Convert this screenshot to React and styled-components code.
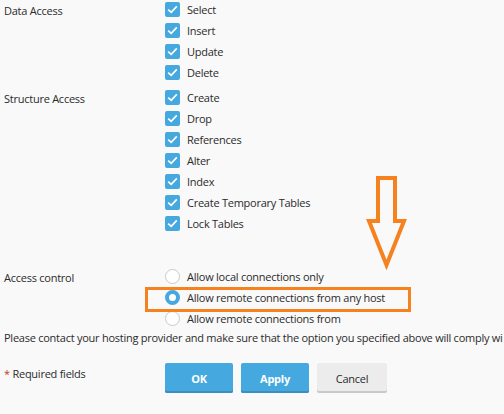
import React from "react";
import styled, { createGlobalStyle } from "styled-components";

const GlobalStyle = createGlobalStyle`
  html, body { margin: 0; padding: 0; }
  body {
    background: #f9f9f9;
    font-family: "Open Sans", "Noto Sans", sans-serif;
    font-size: 11px;
    letter-spacing: -0.25px;
    color: #2b2b2b;
    overflow: hidden;
  }
`;

const Page = styled.div`
  position: relative;
  width: 504px;
  height: 414px;
  padding: 2px 0 0 4px;
  box-sizing: border-box;
  white-space: nowrap;
  overflow: hidden;
`;

const Section = styled.div`
  display: grid;
  grid-template-columns: 161px 1fr;
  margin-top: ${(p) => p.$gap || 0}px;
`;

const Label = styled.div`
  line-height: 15px;
  padding-top: 1px;
`;

const Options = styled.div`
  display: flex;
  flex-direction: column;
`;

const Row = styled.div`
  display: flex;
  align-items: center;
  gap: 7px;
  height: 15px;
  margin-bottom: 6px;
  line-height: 15px;
`;

const Check = styled.span`
  width: 15px;
  height: 15px;
  border-radius: 2px;
  background: #45a9e0;
  display: inline-flex;
  align-items: center;
  justify-content: center;
  flex: none;
`;

const Radio = styled.span`
  width: 15px;
  height: 15px;
  border-radius: 50%;
  box-sizing: border-box;
  border: ${(p) => (p.$on ? "4px solid #45a9e0" : "1px solid #c9c9c9")};
  background: #fff;
  flex: none;
`;

const Note = styled.p`
  margin: 0;
  margin-top: -2px;
  line-height: 15px;
  width: 500px;
  overflow: hidden;
`;

const Footer = styled.div`
  display: grid;
  grid-template-columns: 161px 1fr;
  margin-top: 18px;
`;

const Required = styled.div`
  padding-top: 3px;
  line-height: 15px;
  & span { color: #c0392b; }
`;

const Buttons = styled.div`
  display: flex;
  gap: 8px;
`;

const Button = styled.button`
  width: ${(p) => p.$w || 68}px;
  height: 30px;
  border: none;
  border-radius: 2px;
  font-family: inherit;
  font-size: 11px;
  letter-spacing: -0.25px;
  font-weight: ${(p) => (p.$primary ? 700 : 400)};
  color: ${(p) => (p.$primary ? "#fff" : "#2b2b2b")};
  background: ${(p) => (p.$primary ? "#45a9e0" : "#ececec")};
  box-shadow: inset 0 -2px 0 ${(p) => (p.$primary ? "#3a8fc0" : "#c9c9c9")};
  padding: 0;
`;

const Highlight = styled.div`
  position: absolute;
  left: 145px;
  top: 287px;
  width: 266px;
  height: 25px;
  box-sizing: border-box;
  border: 3px solid #f5821f;
  pointer-events: none;
`;

const Arrow = styled.svg`
  position: absolute;
  left: 364px;
  top: 174px;
`;

const Tick = () => (
  <svg width="11" height="9" viewBox="0 0 11 9">
    <path d="M1.2 4.6 L4.2 7.4 L9.8 1.4" fill="none" stroke="#fff" strokeWidth="1.7" />
  </svg>
);

const data = ["Select", "Insert", "Update", "Delete"];
const structure = [
  "Create",
  "Drop",
  "References",
  "Alter",
  "Index",
  "Create Temporary Tables",
  "Lock Tables",
];

const CheckList = ({ items }) => (
  <Options>
    {items.map((t) => (
      <Row key={t}>
        <Check>
          <Tick />
        </Check>
        {t}
      </Row>
    ))}
  </Options>
);

export default function App() {
  return (
    <>
      <GlobalStyle />
      <Page>
        <Section>
          <Label>Data Access</Label>
          <CheckList items={data} />
        </Section>
        <Section $gap={4}>
          <Label>Structure Access</Label>
          <CheckList items={structure} />
        </Section>
        <Section $gap={32}>
          <Label>Access control</Label>
          <Options>
            <Row>
              <Radio />
              Allow local connections only
            </Row>
            <Row>
              <Radio $on />
              Allow remote connections from any host
            </Row>
            <Row>
              <Radio />
              Allow remote connections from
            </Row>
          </Options>
        </Section>
        <Note>
          Please contact your hosting provider and make sure that the option you specified above will comply wi
        </Note>
        <Footer>
          <Required>
            <span>*</span> Required fields
          </Required>
          <Buttons>
            <Button $primary>OK</Button>
            <Button $primary>Apply</Button>
            <Button $w={70}>Cancel</Button>
          </Buttons>
        </Footer>
        <Highlight />
        <Arrow width="46" height="96" viewBox="0 0 46 96">
          <polygon
            points="14,4 31,4 31,47 40,47 22.5,91 5,47 14,47"
            fill="none"
            stroke="#f5821f"
            strokeWidth="4"
            strokeLinejoin="miter"
          />
        </Arrow>
      </Page>
    </>
  );
}
